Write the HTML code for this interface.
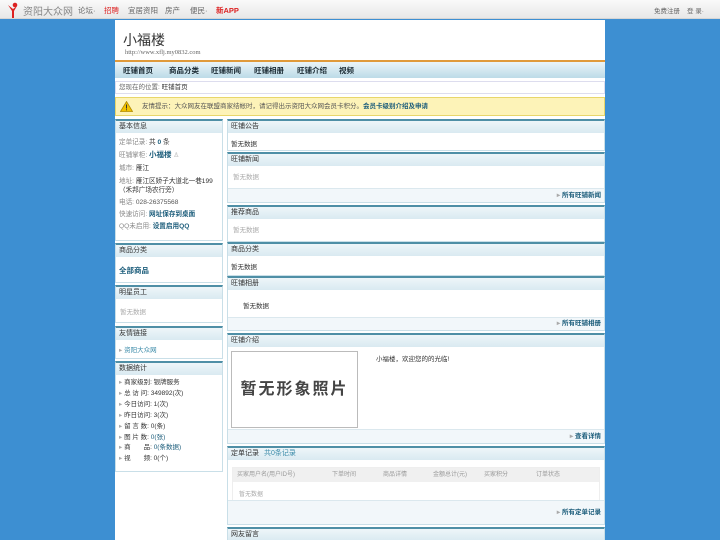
<!DOCTYPE html><html><head><meta charset="utf-8"><style>
*{margin:0;padding:0;box-sizing:border-box}
html,body{width:720px;height:540px;overflow:hidden}
body{background:#3d8fd2;font-family:"Liberation Sans","Noto Sans CJK SC",sans-serif;font-size:7px;color:#333;position:relative}
.top{position:absolute;left:0;top:0;width:720px;height:19px;background:linear-gradient(#fafafa,#e8e8e8);border-bottom:1px solid #d5d5d5}
.top span{position:absolute;top:5px;font-size:7.5px;color:#666}
.wrap{position:absolute;left:115px;top:20px;width:490px;height:520px;background:#fff;overflow:hidden}
.a{position:absolute}
.box{position:absolute;border:1px solid #c9dfe8;border-top:2px solid #4f8fa6;background:#fff}
.box .h{height:12px;background:linear-gradient(#eef6f9,#d9eaf1);font-size:7px;line-height:12px;padding-left:3px;color:#333}
.box .f{position:absolute;left:0;right:0;bottom:0;background:#f2f7fa;border-top:1px solid #dbe8ee;text-align:right;padding-right:3px;font-size:6.5px;color:#1c5d7b;font-weight:bold}
.g{color:#aaa}
.l{color:#1c5d7b}
</style></head><body>
<div class="top">
<svg style="position:absolute;left:7px;top:2px" width="14" height="16" viewBox="0 0 14 16"><circle cx="8" cy="3" r="2.3" fill="#d22"/><path d="M1 3 L6 7 L10 4 L7 9 L7 16 L5 16 L5 9 Z" fill="#d22"/></svg>
<span style="left:23px;top:3px;font-size:10px;color:#888">资阳大众网</span>
<span style="left:78px">论坛·</span><span style="left:104px;color:#d22">招聘</span><span style="left:128px">宜居资阳</span><span style="left:165px">房产</span><span style="left:190px">便民·</span><span style="left:216px;color:#d22;font-weight:bold">新APP</span>
<span style="left:654px;font-size:6.5px">免费注册</span><span style="left:687px;font-size:6.5px">登 录·</span>
</div>
<div class="wrap">
<div class="a" style="left:8px;top:10px;font-size:14px;color:#333">小福楼</div>
<div class="a" style="left:10px;top:29px;font-size:6.5px;color:#666;font-family:'Liberation Serif',serif">http://www.xflj.my0832.com</div>
<div class="a" style="left:0;top:40px;width:490px;height:2px;background:#e09a3a"></div>
<div class="a" style="left:20px;top:42px;width:0;height:0;border:3px solid transparent;border-top-color:#e09a3a"></div>
<div class="a" style="left:0;top:42px;width:490px;height:16px;background:linear-gradient(#eaf4f8,#bcdbe8);font-size:7.5px;font-weight:bold;line-height:17px;color:#1a2a33">
<span class="a" style="left:8px">旺铺首页</span><span class="a" style="left:54px">商品分类</span><span class="a" style="left:96px">旺铺新闻</span><span class="a" style="left:139px">旺铺相册</span><span class="a" style="left:182px">旺铺介绍</span><span class="a" style="left:224px">视频</span></div>
<div class="a" style="left:0;top:61px;width:490px;height:13px;border:1px solid #dde;font-size:6.5px;line-height:11px;padding-left:3px;color:#666">您现在的位置: <b style="color:#333;font-weight:normal">旺铺首页</b></div>
<div class="a" style="left:0;top:77px;width:490px;height:19px;background:#fdf3b8;border:1px solid #e8d66a;font-size:6.5px;line-height:17px;padding-left:26px;color:#555">友情提示：大众网友在联盟商家结帐时，请记得出示资阳大众网会员卡积分。<b class="l">会员卡级别介绍及申请</b>
<svg class="a" style="left:4px;top:3px" width="13" height="11" viewBox="0 0 13 11"><path d="M6.5 0.5 L12.5 10.5 L0.5 10.5 Z" fill="#f2c200" stroke="#b08a00" stroke-width=".8"/><rect x="6" y="3.5" width="1" height="4" fill="#333"/><rect x="6" y="8.3" width="1" height="1" fill="#333"/></svg></div>

<div class="box" style="left:0;top:99px;width:108px;height:122px"><div class="h">基本信息</div>
<div style="padding:4px 3px;font-size:6.6px;line-height:12.3px;color:#888">
<div>定单记录: <span style="color:#333">共 <b class="l">0</b> 条</span></div>
<div>旺铺掌柜: <b class="l" style="font-size:7.5px">小福楼</b> <span class="g">♙</span></div>
<div>城市: <span style="color:#333">雁江</span></div>
<div style="line-height:9px;margin:2px 0">地址: <span style="color:#333">雁江区娇子大道北一巷199（禾邦广场农行旁）</span></div>
<div>电话: <span style="color:#555">028-26375568</span></div>
<div>快速访问: <b class="l">网址保存到桌面</b></div>
<div>QQ未启用: <b class="l">设置启用QQ</b></div></div></div>
<div class="box" style="left:0;top:223px;width:108px;height:40px"><div class="h">商品分类</div><div style="padding:8px 3px;font-size:7.5px;font-weight:bold" class="l">全部商品</div></div>
<div class="box" style="left:0;top:265px;width:108px;height:38px"><div class="h">明星员工</div><div style="padding:7px 4px;font-size:6.5px" class="g">暂无数据</div></div>
<div class="box" style="left:0;top:306px;width:108px;height:33px"><div class="h">友情链接</div><div style="padding:4px 3px;font-size:6.5px;color:#3a8aa8"><span class="g">▸</span> 资阳大众网</div></div>
<div class="box" style="left:0;top:341px;width:108px;height:111px"><div class="h">数据统计</div>
<div style="padding:3px 3px;font-size:6.5px;line-height:10.9px;color:#333">
<div><span class="g">▸</span> 商家级别: 银牌服务</div><div><span class="g">▸</span> 总 访 问: 349892(次)</div><div><span class="g">▸</span> 今日访问: 1(次)</div><div><span class="g">▸</span> 昨日访问: 3(次)</div><div><span class="g">▸</span> 留 言 数: 0(条)</div><div><span class="g">▸</span> 图 片 数: <span class="l">0(张)</span></div><div><span class="g">▸</span> 商　　品: <span class="l">0(条数据)</span></div><div><span class="g">▸</span> 视　　频: 0(个)</div></div></div>

<div class="box" style="left:112px;top:99px;width:378px;height:32px"><div class="h">旺铺公告</div><div style="padding:5px 3px;font-size:6.5px">暂无数据</div></div>
<div class="box" style="left:112px;top:132px;width:378px;height:51px"><div class="h">旺铺新闻</div><div style="padding:5px 5px;font-size:6.5px" class="g">暂无数据</div><div class="f" style="height:14px;line-height:13px"><span class="g">▸</span> 所有旺铺新闻</div></div>
<div class="box" style="left:112px;top:185px;width:378px;height:37px"><div class="h">推荐商品</div><div style="padding:5px 5px;font-size:6.5px" class="g">暂无数据</div></div>
<div class="box" style="left:112px;top:222px;width:378px;height:34px"><div class="h">商品分类</div><div style="padding:5px 3px;font-size:6.5px">暂无数据</div></div>
<div class="box" style="left:112px;top:256px;width:378px;height:55px"><div class="h">旺铺相册</div><div style="padding:10px 15px;font-size:6.5px">暂无数据</div><div class="f" style="height:13px;line-height:12px"><span class="g">▸</span> 所有旺铺相册</div></div>
<div class="box" style="left:112px;top:313px;width:378px;height:111px"><div class="h">旺铺介绍</div>
<div class="a" style="left:3px;top:16px;width:127px;height:77px;border:1px solid #bbb;font-size:16px;font-weight:bold;color:#444;text-align:center;line-height:75px;letter-spacing:2px">暂无形象照片</div>
<div class="a" style="left:148px;top:18px;font-size:6.5px">小福楼，欢迎您的的光临!</div>
<div class="f" style="height:14px;line-height:13px"><span class="g">▸</span> 查看详情</div></div>
<div class="box" style="left:112px;top:426px;width:378px;height:79px"><div class="h">定单记录 <span style="color:#3a8aa8;margin-left:3px">共0条记录</span></div>
<div class="a" style="left:4px;top:19px;width:368px;height:36px;border:1px solid #eee;font-size:6px;color:#999">
<div style="height:14px;background:#f0f0f0;line-height:14px;position:relative"><span class="a" style="left:4px">买家用户名(用户ID号)</span><span class="a" style="left:99px">下单时间</span><span class="a" style="left:150px">商品详情</span><span class="a" style="left:200px">金额总计(元)</span><span class="a" style="left:251px">买家积分</span><span class="a" style="left:303px">订单状态</span></div>
<div style="padding:7px 6px" class="g">暂无数据</div></div>
<div class="f" style="height:24px;line-height:24px"><span class="g">▸</span> 所有定单记录</div></div>
<div class="box" style="left:112px;top:507px;width:378px;height:20px"><div class="h">网友留言</div></div>
</div>
</body></html>
